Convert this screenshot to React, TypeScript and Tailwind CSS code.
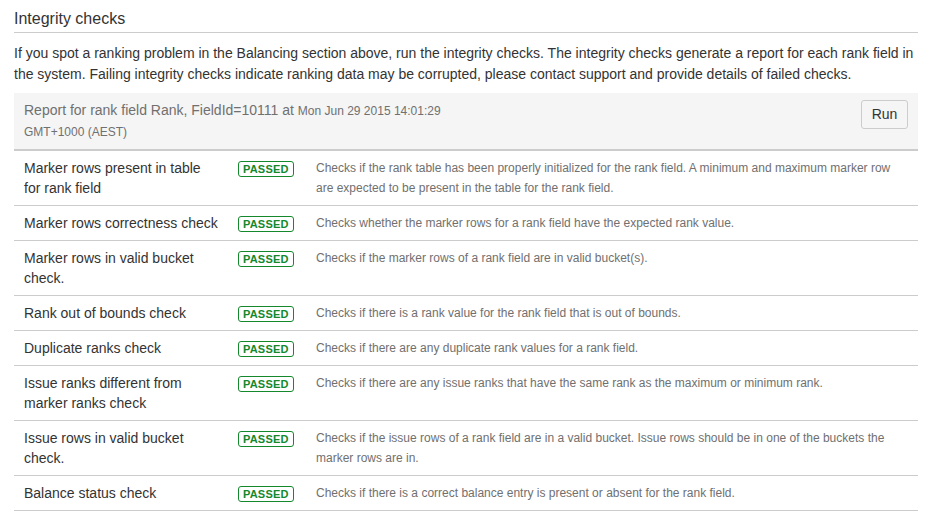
import React from "react";

const rows: { name: string; desc: string }[] = [
  {
    name: "Marker rows present in table for rank field",
    desc: "Checks if the rank table has been properly initialized for the rank field. A minimum and maximum marker row are expected to be present in the table for the rank field.",
  },
  {
    name: "Marker rows correctness check",
    desc: "Checks whether the marker rows for a rank field have the expected rank value.",
  },
  {
    name: "Marker rows in valid bucket check.",
    desc: "Checks if the marker rows of a rank field are in valid bucket(s).",
  },
  {
    name: "Rank out of bounds check",
    desc: "Checks if there is a rank value for the rank field that is out of bounds.",
  },
  {
    name: "Duplicate ranks check",
    desc: "Checks if there are any duplicate rank values for a rank field.",
  },
  {
    name: "Issue ranks different from marker ranks check",
    desc: "Checks if there are any issue ranks that have the same rank as the maximum or minimum rank.",
  },
  {
    name: "Issue rows in valid bucket check.",
    desc: "Checks if the issue rows of a rank field are in a valid bucket. Issue rows should be in one of the buckets the marker rows are in.",
  },
  {
    name: "Balance status check",
    desc: "Checks if there is a correct balance entry is present or absent for the rank field.",
  },
];

export default function App() {
  return (
    <div
      className="w-[932px] h-[523px] bg-white text-[#333] px-[14px] overflow-hidden"
      style={{ fontFamily: '"Liberation Sans", Arial, sans-serif' }}
    >
      <h2 className="pt-[9px] pb-[3px] text-[16px] leading-[20px] font-normal border-b border-[#ccc]">
        Integrity checks
      </h2>
      <p className="mt-[10px] text-[14px] leading-[21px]">
        If you spot a ranking problem in the Balancing section above, run the integrity checks. The integrity checks
        generate a report for each rank field in the system. Failing integrity checks indicate ranking data may be
        corrupted, please contact support and provide details of failed checks.
      </p>
      <div className="mt-[8px] bg-[#f5f5f5] border-b-2 border-[#ccc] flex items-start justify-between pl-[10px] pr-[10px] pt-[7px] pb-[7px]">
        <div className="text-[#707070] leading-[20px]">
          <span className="text-[14px]">Report for rank field Rank, FieldId=10111 at </span>
          <span className="text-[12px]">Mon Jun 29 2015 14:01:29</span>
          <br />
          <span className="text-[12px]">GMT+1000 (AEST)</span>
        </div>
        <button className="h-[29px] w-[47px] border border-[#ccc] rounded-[3px] bg-[#f5f5f5] text-[14px] text-[#333]">
          Run
        </button>
      </div>
      <div className="flex flex-col">
        {rows.map((r) => (
          <div key={r.name} className="grid grid-cols-[214px_78px_1fr] border-b border-[#ccc] py-[7px]">
            <div className="pl-[10px] pr-[9px] text-[14px] leading-[20px]">{r.name}</div>
            <div className="px-[10px] pt-[3px] leading-none">
              <span className="block w-fit h-[16px] px-[4px] border border-[#14892c] rounded-[3px] text-[#14892c] text-[11px] font-bold leading-[14px] tracking-[0.2px]">
                PASSED
              </span>
            </div>
            <div className="px-[10px] text-[12px] leading-[20px] text-[#707070]">{r.desc}</div>
          </div>
        ))}
      </div>
    </div>
  );
}
